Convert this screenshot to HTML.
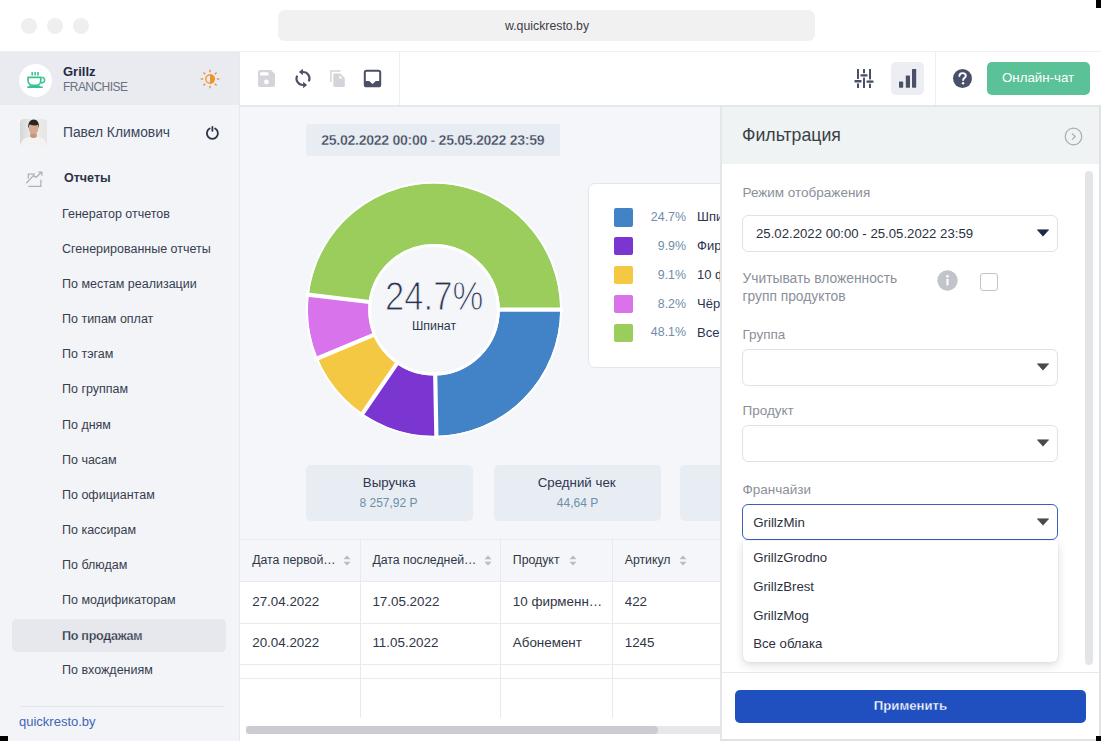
<!DOCTYPE html>
<html><head><meta charset="utf-8"><style>
html,body{margin:0;padding:0;width:1101px;height:741px;overflow:hidden;background:#fff;position:relative}
*{font-family:"Liberation Sans",sans-serif}
.t{position:absolute;white-space:nowrap;line-height:1}
.r{position:absolute;display:block}
</style></head><body>
<div class="r" style="left:21px;top:18px;width:16px;height:16px;background:#efefef;border-radius:8px;"></div>
<div class="r" style="left:47px;top:18px;width:16px;height:16px;background:#efefef;border-radius:8px;"></div>
<div class="r" style="left:73px;top:18px;width:16px;height:16px;background:#efefef;border-radius:8px;"></div>
<div class="r" style="left:278px;top:10px;width:537px;height:31px;background:#f1f1f1;border-radius:7px;"></div>
<div class="t " style="left:505px;top:19.59px;font-size:12.3px;color:#3d3d48;font-weight:400;">w.quickresto.by</div>
<div class="r" style="left:0px;top:51px;width:1101px;height:1px;background:#f0f0f2;border-radius:0px;"></div>
<div class="r" style="left:0px;top:52px;width:240px;height:689px;background:#f3f4f8;border-radius:0px;"></div>
<div class="r" style="left:239px;top:52px;width:1px;height:689px;background:#e6e8ec;border-radius:0px;"></div>
<div class="r" style="left:0px;top:52px;width:239px;height:53px;background:#e9ebf0;border-radius:0px;"></div>
<div class="r" style="left:19px;top:64px;width:33px;height:33px;background:#ffffff;border-radius:17px;"></div>
<svg class="r" style="left:22px;top:67px" width="28" height="26" viewBox="22 67 28 26">
<g fill="#35c390">
<rect x="31.4" y="72" width="1.6" height="3.6" rx=".5"/><rect x="34.3" y="72" width="1.6" height="3.6" rx=".5"/><rect x="37.2" y="72" width="1.6" height="3.6" rx=".5"/>
<path fill-rule="evenodd" d="M27.3 76.5H41.6V80.5C41.6 83.5 39.5 85.9 36.5 85.9H32.4C29.4 85.9 27.3 83.5 27.3 80.5Z M28.9 78.2H40V80.5C40 82.8 38.6 84.6 36.5 84.6H32.4C30.3 84.6 28.9 82.8 28.9 80.5Z"/>
<path d="M41.6 76.8H42.4C44.1 76.8 45.4 78.3 45.4 80.1C45.4 82 44 83.5 42.2 83.5H40.8V82H42.2C43.1 82 43.9 81.2 43.9 80.1C43.9 79.1 43.2 78.3 42.3 78.3H41.6Z"/>
<path d="M30 85.2H39L40.8 86.5H42.7V88H27.3V86.5H28.2Z"/>
</g></svg>
<div class="t " style="left:63px;top:65.00px;font-size:13px;color:#1f2a44;font-weight:700;">Grillz</div>
<div class="t " style="left:63px;top:81.14px;font-size:12px;color:#6b7180;font-weight:400;letter-spacing:-0.55px">FRANCHISE</div>
<svg class="r" style="left:199.8px;top:68.5px" width="20" height="20" viewBox="0 0 20 20">
<g stroke="#e39640" stroke-width="1.4" fill="none"><line x1="16.80" y1="10.00" x2="19.30" y2="10.00"/><line x1="14.81" y1="14.81" x2="16.58" y2="16.58"/><line x1="10.00" y1="16.80" x2="10.00" y2="19.30"/><line x1="5.19" y1="14.81" x2="3.42" y2="16.58"/><line x1="3.20" y1="10.00" x2="0.70" y2="10.00"/><line x1="5.19" y1="5.19" x2="3.42" y2="3.42"/><line x1="10.00" y1="3.20" x2="10.00" y2="0.70"/><line x1="14.81" y1="5.19" x2="16.58" y2="3.42"/></g><circle cx="10" cy="10" r="4.2" stroke="#ef9428" stroke-width="1.3" fill="none"/>
<path d="M10 5.2a4.8 4.8 0 0 1 0 9.6z" fill="#ef9428"/></svg>
<svg class="r" style="left:20px;top:119px" width="27" height="27" viewBox="0 0 27 27">
<defs><clipPath id="av"><rect width="27" height="27" rx="4"/></clipPath><linearGradient id="avbg" x1="0" x2="1"><stop offset="0" stop-color="#d6d7d7"/><stop offset="0.5" stop-color="#eeeeed"/><stop offset="1" stop-color="#e6e5e4"/></linearGradient></defs>
<g clip-path="url(#av)"><rect width="27" height="27" fill="url(#avbg)"/>
<path d="M0.5 27c0.3-5 2.5-7.6 6.5-8.6l6.5-1.6 6.5 1.6c4 1 6.2 3.6 6.5 8.6z" fill="#f3f4f1"/>
<path d="M10.6 12.5h5.8l0.5 5.3c-1 0.9-2.2 1.3-3.4 1.3s-2.4-0.4-3.4-1.3z" fill="#c4967c"/>
<ellipse cx="13.6" cy="9.6" rx="4.7" ry="5.6" fill="#d6aa90"/>
<path d="M8.4 9.5c-0.8-5.2 1.6-8.9 5.2-8.9 3.6 0 5.9 3.2 5.2 8.6l-0.9-3.1c-1.8 0.6-5 0.4-8.2-0.6z" fill="#2b2521"/>
</g></svg>
<div class="t " style="left:63px;top:125.92px;font-size:13.8px;color:#3c4458;font-weight:400;">Павел Климович</div>
<svg class="r" style="left:204px;top:124px" width="17" height="17" viewBox="204 124 17 17">
<g stroke="#2d3446" stroke-width="1.8" fill="none" stroke-linecap="round"><path d="M209.65 128.54A5.5 5.5 0 1 0 215.15 128.54"/><path d="M212.4 127V130.8"/></g></svg>
<svg class="r" style="left:24px;top:170px" width="20" height="19" viewBox="24 170 20 19">
<g stroke="#aeb1b8" stroke-width="1.3" fill="none"><path d="M35 174.1H28.3v4.5"/><path d="M28.3 186.3h12.6v-6.5"/><path d="M26.3 183.3l7.1-7.7 2.6 1.8 5.5-5.2"/><path d="M38.3 172.1h3.6v3.6"/></g></svg>
<div class="t " style="left:64px;top:172.42px;font-size:12.5px;color:#2d3446;font-weight:700;">Отчеты</div>
<div class="r" style="left:12px;top:619px;width:214px;height:33px;background:#e6e8ed;border-radius:5px;"></div>
<div class="t " style="left:62px;top:207.92px;font-size:12.5px;color:#363d4f;font-weight:400;">Генератор отчетов</div>
<div class="t " style="left:62px;top:243.02px;font-size:12.5px;color:#363d4f;font-weight:400;">Сгенерированные отчеты</div>
<div class="t " style="left:62px;top:278.12px;font-size:12.5px;color:#363d4f;font-weight:400;">По местам реализации</div>
<div class="t " style="left:62px;top:313.22px;font-size:12.5px;color:#363d4f;font-weight:400;">По типам оплат</div>
<div class="t " style="left:62px;top:348.32px;font-size:12.5px;color:#363d4f;font-weight:400;">По тэгам</div>
<div class="t " style="left:62px;top:383.42px;font-size:12.5px;color:#363d4f;font-weight:400;">По группам</div>
<div class="t " style="left:62px;top:418.52px;font-size:12.5px;color:#363d4f;font-weight:400;">По дням</div>
<div class="t " style="left:62px;top:453.62px;font-size:12.5px;color:#363d4f;font-weight:400;">По часам</div>
<div class="t " style="left:62px;top:488.72px;font-size:12.5px;color:#363d4f;font-weight:400;">По официантам</div>
<div class="t " style="left:62px;top:523.82px;font-size:12.5px;color:#363d4f;font-weight:400;">По кассирам</div>
<div class="t " style="left:62px;top:558.92px;font-size:12.5px;color:#363d4f;font-weight:400;">По блюдам</div>
<div class="t " style="left:62px;top:594.02px;font-size:12.5px;color:#363d4f;font-weight:400;">По модификаторам</div>
<div class="t " style="left:62px;top:629.63px;font-size:12.6px;color:#2d3446;font-weight:700;letter-spacing:-0.3px;-webkit-text-stroke:0.25px #e6e8ed">По продажам</div>
<div class="t " style="left:62px;top:664.22px;font-size:12.5px;color:#363d4f;font-weight:400;">По вхождениям</div>
<div class="r" style="left:20px;top:706px;width:204px;height:1px;background:#e3e5ea;border-radius:0px;"></div>
<div class="t " style="left:19px;top:714.70px;font-size:13px;color:#3d64b6;font-weight:400;">quickresto.by</div>
<div class="r" style="left:240px;top:52px;width:861px;height:53px;background:#ffffff;border-radius:0px;"></div>
<div class="r" style="left:240px;top:105px;width:480px;height:2px;background:#e6e9ec;border-radius:0px;"></div>
<div class="r" style="left:399px;top:52px;width:1px;height:53px;background:#eceef1;border-radius:0px;"></div>
<div class="r" style="left:935px;top:52px;width:1px;height:53px;background:#eceef1;border-radius:0px;"></div>
<svg class="r" style="left:258px;top:70px" width="17" height="17" viewBox="0 0 17 17">
<path d="M2 0h11l4 4v11a2 2 0 0 1-2 2H2a2 2 0 0 1-2-2V2a2 2 0 0 1 2-2z" fill="#d3d5da"/>
<rect x="1.8" y="2.3" width="9" height="3.3" rx="1.6" fill="#fff"/><circle cx="8.4" cy="12" r="2.4" fill="#fff"/></svg>
<svg class="r" style="left:288px;top:64px" width="28" height="28" viewBox="288 64 28 28">
<g fill="none" stroke="#4a5068" stroke-width="2.1"><path d="M302.4 72A6.5 6.5 0 0 1 308.8 81.4"/><path d="M297.2 75.6A6.5 6.5 0 0 0 303.6 85"/></g>
<path d="M298.9 72L302.9 68.7V75.3Z M307.1 85L303.1 81.7V88.3Z" fill="#4a5068"/></svg>
<svg class="r" style="left:324px;top:64px" width="28" height="28" viewBox="324 64 28 28">
<path d="M330.9 82V70.9H340.6" stroke="#d3d5da" stroke-width="1.5" fill="none"/>
<path d="M333.3 74.6Q333.3 73.4 334.5 73.4H340.2L344.8 78V85.7Q344.8 86.9 343.6 86.9H334.5Q333.3 86.9 333.3 85.7Z" fill="#d3d5da"/>
<path d="M339.3 75.2V78.5H342.8Z" fill="#fff"/></svg>
<svg class="r" style="left:363px;top:69px" width="19" height="19" viewBox="0 0 19 19">
<rect x="1.8" y="1.8" width="15.4" height="15.4" rx="1.8" fill="none" stroke="#4a5068" stroke-width="2"/>
<path d="M1 12h5.2l3.3 3 3.3-3H18v5.5H1z" fill="#4a5068"/></svg>
<svg class="r" style="left:854px;top:68px" width="20" height="21" viewBox="0 0 20 21">
<g stroke="#4a5068" stroke-width="2" fill="none"><path d="M4 1v19M10 1v19M16 1v19"/></g>
<g fill="#4a5068"><rect x="0.5" y="12" width="7" height="2.4" rx=".5"/><rect x="6.5" y="6.2" width="7" height="2.4" rx=".5"/><rect x="12.5" y="12.4" width="7" height="2.4" rx=".5"/></g>
<g fill="#fff"><rect x="3" y="11" width="2" height="1"/><rect x="3" y="14.4" width="2" height="1"/><rect x="9" y="5.2" width="2" height="1"/><rect x="9" y="8.6" width="2" height="1"/><rect x="15" y="11.4" width="2" height="1"/><rect x="15" y="14.8" width="2" height="1"/></g></svg>
<div class="r" style="left:891px;top:62px;width:33px;height:33px;background:#eceef3;border-radius:5px;"></div>
<svg class="r" style="left:898px;top:68px" width="20" height="21" viewBox="0 0 20 21">
<g fill="#4a5068"><rect x="1" y="13.6" width="4.2" height="6.1" rx=".6"/><rect x="7.8" y="7.6" width="4.2" height="12.1" rx=".6"/><rect x="14" y="1" width="4.2" height="18.7" rx=".6"/></g></svg>
<svg class="r" style="left:952px;top:68px" width="21" height="21" viewBox="0 0 21 21">
<circle cx="10.5" cy="10.5" r="9.5" fill="#4a5068"/>
<path d="M7.4 8.1c0-1.9 1.4-3 3.2-3 1.9 0 3.2 1.1 3.2 2.7 0 2.2-2.7 2.3-2.7 4.3" fill="none" stroke="#fff" stroke-width="1.9" stroke-linecap="round"/>
<circle cx="11.1" cy="15.2" r="1.2" fill="#fff"/></svg>
<div class="r" style="left:987px;top:62px;width:103px;height:33px;background:#5bc196;border-radius:5px;"></div>
<div class="t " style="left:1002px;top:71.24px;font-size:13.3px;color:#ffffff;font-weight:400;">Онлайн-чат</div>
<div class="r" style="left:240px;top:107px;width:480px;height:634px;background:#f4f6f9;border-radius:0px;"></div>
<div class="r" style="left:306px;top:124px;width:254px;height:32px;background:#e8edf3;border-radius:3px;"></div>
<div class="t " style="left:321.3px;top:133.26px;font-size:14.1px;color:#3a4256;font-weight:700;letter-spacing:-0.3px;-webkit-text-stroke:0.35px #e8edf3">25.02.2022 00:00 - 25.05.2022 23:59</div>
<svg class="r" style="left:0;top:0" width="1101" height="741"><path d="M560.20 309.70 A126.2 126.2 0 0 1 436.38 435.88 L435.24 375.49 A65.8 65.8 0 0 0 499.80 309.70 Z" fill="#4183c6"/><path d="M436.38 435.88 A126.2 126.2 0 0 1 362.41 413.63 L396.67 363.89 A65.8 65.8 0 0 0 435.24 375.49 Z" fill="#7b35d1"/><path d="M362.41 413.63 A126.2 126.2 0 0 1 317.56 358.36 L373.29 335.07 A65.8 65.8 0 0 0 396.67 363.89 Z" fill="#f5c843"/><path d="M317.56 358.36 A126.2 126.2 0 0 1 308.70 294.67 L368.67 301.86 A65.8 65.8 0 0 0 373.29 335.07 Z" fill="#d973eb"/><path d="M308.70 294.67 A126.2 126.2 0 0 1 560.20 309.70 L499.80 309.70 A65.8 65.8 0 0 0 368.67 301.86 Z" fill="#9acd5b"/><g stroke="#fff" stroke-width="4.2"><line x1="496.80" y1="309.70" x2="563.20" y2="309.70"/><line x1="435.18" y1="372.49" x2="436.44" y2="438.88"/><line x1="398.38" y1="361.42" x2="360.71" y2="416.10"/><line x1="376.06" y1="333.91" x2="314.79" y2="359.52"/><line x1="371.65" y1="302.22" x2="305.72" y2="294.31"/></g><circle cx="434" cy="309.7" r="127.0" fill="none" stroke="#fff" stroke-width="1.8"/><circle cx="434" cy="309.7" r="64.3" fill="none" stroke="#fff" stroke-width="3"/></svg>
<div class="t " style="left:384.8px;top:275.66px;font-size:40.8px;color:#2b3452;font-weight:400;transform:scaleX(0.85);transform-origin:0 0;-webkit-text-stroke:1.1px #f4f6f9">24.7%</div>
<div class="t " style="left:412px;top:320.30px;font-size:12.4px;color:#2e3650;font-weight:400;">Шпинат</div>
<div class="r" style="left:588px;top:182.5px;width:200px;height:185px;background:#fff;border:1px solid #e3e6ea;border-radius:7px;box-sizing:border-box"></div>
<div class="r" style="left:614px;top:208.0px;width:18.5px;height:18.5px;background:#4183c6;border-radius:2px;"></div>
<div class="t" style="left:600px;width:86px;text-align:right;top:210.80px;font-size:12.4px;color:#6f8dab">24.7%</div>
<div class="t " style="left:697px;top:210.30px;font-size:13px;color:#2b3452;font-weight:400;">Шпинат</div>
<div class="r" style="left:614px;top:236.9px;width:18.5px;height:18.5px;background:#7b35d1;border-radius:2px;"></div>
<div class="t" style="left:600px;width:86px;text-align:right;top:239.70px;font-size:12.4px;color:#6f8dab">9.9%</div>
<div class="t " style="left:697px;top:239.20px;font-size:13px;color:#2b3452;font-weight:400;">Фирменный</div>
<div class="r" style="left:614px;top:265.8px;width:18.5px;height:18.5px;background:#f4c843;border-radius:2px;"></div>
<div class="t" style="left:600px;width:86px;text-align:right;top:268.60px;font-size:12.4px;color:#6f8dab">9.1%</div>
<div class="t " style="left:697px;top:268.10px;font-size:13px;color:#2b3452;font-weight:400;">10 фирменных</div>
<div class="r" style="left:614px;top:294.7px;width:18.5px;height:18.5px;background:#da73ea;border-radius:2px;"></div>
<div class="t" style="left:600px;width:86px;text-align:right;top:297.50px;font-size:12.4px;color:#6f8dab">8.2%</div>
<div class="t " style="left:697px;top:297.00px;font-size:13px;color:#2b3452;font-weight:400;">Чёрный</div>
<div class="r" style="left:614px;top:323.6px;width:18.5px;height:18.5px;background:#9acd5b;border-radius:2px;"></div>
<div class="t" style="left:600px;width:86px;text-align:right;top:326.40px;font-size:12.4px;color:#6f8dab">48.1%</div>
<div class="t " style="left:697px;top:325.90px;font-size:13px;color:#2b3452;font-weight:400;">Все остальные</div>
<div class="r" style="left:306px;top:465px;width:167px;height:56px;background:#e8edf3;border-radius:5px;"></div>
<div class="t" style="left:305.2px;width:168px;text-align:center;top:476.14px;font-size:13.3px;color:#2e3650">Выручка</div>
<div class="t" style="left:304.5px;width:168px;text-align:center;top:496.64px;font-size:12px;color:#6c8fa8">8 257,92 Р</div>
<div class="r" style="left:493.5px;top:465px;width:167px;height:56px;background:#e8edf3;border-radius:5px;"></div>
<div class="t" style="left:492.7px;width:168px;text-align:center;top:476.14px;font-size:13.3px;color:#2e3650">Средний чек</div>
<div class="t" style="left:493.5px;width:168px;text-align:center;top:496.64px;font-size:12px;color:#6c8fa8">44,64 Р</div>
<div class="r" style="left:680px;top:465px;width:167px;height:56px;background:#e8edf3;border-radius:5px;"></div>
<div class="t" style="left:679.2px;width:168px;text-align:center;top:476.14px;font-size:13.3px;color:#2e3650"></div>
<div class="t" style="left:680px;width:168px;text-align:center;top:496.64px;font-size:12px;color:#6c8fa8"></div>
<div class="r" style="left:240px;top:539px;width:480px;height:42px;background:#f4f6f9;border-radius:0px;"></div>
<div class="r" style="left:240px;top:581px;width:480px;height:160px;background:#ffffff;border-radius:0px;"></div>
<div class="r" style="left:240px;top:539px;width:480px;height:1px;background:#e8eaee;border-radius:0px;"></div>
<div class="r" style="left:240px;top:581px;width:480px;height:1px;background:#e8eaee;border-radius:0px;"></div>
<div class="r" style="left:240px;top:622.5px;width:480px;height:1px;background:#e8eaee;border-radius:0px;"></div>
<div class="r" style="left:240px;top:664px;width:480px;height:1px;background:#e8eaee;border-radius:0px;"></div>
<div class="r" style="left:240px;top:678px;width:480px;height:1px;background:#e8eaee;border-radius:0px;"></div>
<div class="r" style="left:359.5px;top:539px;width:1px;height:179px;background:#e8eaee;border-radius:0px;"></div>
<div class="r" style="left:500px;top:539px;width:1px;height:179px;background:#e8eaee;border-radius:0px;"></div>
<div class="r" style="left:611.5px;top:539px;width:1px;height:179px;background:#e8eaee;border-radius:0px;"></div>
<div class="t " style="left:252.2px;top:554.29px;font-size:12.3px;color:#2f3647;font-weight:400;">Дата первой…</div>
<svg class="r" style="left:343.4px;top:555px" width="8" height="11" viewBox="0 0 8 11"><path d="M4 0.5L7.6 4.3H0.4z M4 10.5L7.6 6.7H0.4z" fill="#b9bcc2"/></svg>
<div class="t " style="left:372.4px;top:554.29px;font-size:12.3px;color:#2f3647;font-weight:400;">Дата последней…</div>
<svg class="r" style="left:484.2px;top:555px" width="8" height="11" viewBox="0 0 8 11"><path d="M4 0.5L7.6 4.3H0.4z M4 10.5L7.6 6.7H0.4z" fill="#b9bcc2"/></svg>
<div class="t " style="left:512.8px;top:554.29px;font-size:12.3px;color:#2f3647;font-weight:400;">Продукт</div>
<svg class="r" style="left:569px;top:555px" width="8" height="11" viewBox="0 0 8 11"><path d="M4 0.5L7.6 4.3H0.4z M4 10.5L7.6 6.7H0.4z" fill="#b9bcc2"/></svg>
<div class="t " style="left:624.7px;top:554.29px;font-size:12.3px;color:#2f3647;font-weight:400;">Артикул</div>
<svg class="r" style="left:679.3px;top:555px" width="8" height="11" viewBox="0 0 8 11"><path d="M4 0.5L7.6 4.3H0.4z M4 10.5L7.6 6.7H0.4z" fill="#b9bcc2"/></svg>
<div class="t " style="left:252.2px;top:594.96px;font-size:13.4px;color:#2f3647;font-weight:400;">27.04.2022</div>
<div class="t " style="left:372.4px;top:594.96px;font-size:13.4px;color:#2f3647;font-weight:400;">17.05.2022</div>
<div class="t " style="left:512.8px;top:594.96px;font-size:13.4px;color:#2f3647;font-weight:400;">10 фирменн…</div>
<div class="t " style="left:624.7px;top:594.96px;font-size:13.4px;color:#2f3647;font-weight:400;">422</div>
<div class="t " style="left:252.2px;top:636.26px;font-size:13.4px;color:#2f3647;font-weight:400;">20.04.2022</div>
<div class="t " style="left:372.4px;top:636.26px;font-size:13.4px;color:#2f3647;font-weight:400;">11.05.2022</div>
<div class="t " style="left:512.8px;top:636.26px;font-size:13.4px;color:#2f3647;font-weight:400;">Абонемент</div>
<div class="t " style="left:624.7px;top:636.26px;font-size:13.4px;color:#2f3647;font-weight:400;">1245</div>
<div class="r" style="left:246px;top:726px;width:474px;height:8px;background:#e6e7ea;border-radius:4px 0 0 4pxpx;"></div>
<div class="r" style="left:246px;top:726px;width:412px;height:8px;background:#cbccd2;border-radius:4px;"></div>
<div class="r" style="left:720px;top:105px;width:381px;height:636px;background:#ffffff;border-radius:0px;"></div>
<div class="r" style="left:720px;top:105px;width:2px;height:636px;background:#e4e6e9;border-radius:0px;"></div>
<div class="r" style="left:1099px;top:105px;width:2px;height:636px;background:#e0e3e6;border-radius:0px;"></div>
<div class="r" style="left:722px;top:105px;width:377px;height:2px;background:#e4e7ea;border-radius:0px;"></div>
<div class="r" style="left:722px;top:107px;width:377px;height:56.6px;background:#eff3f4;border-radius:0px;"></div>
<div class="t " style="left:742px;top:127.22px;font-size:17.7px;color:#3a3f45;font-weight:400;">Фильтрация</div>
<svg class="r" style="left:1064px;top:126.5px" width="19" height="19" viewBox="0 0 19 19">
<circle cx="9.5" cy="9.5" r="8.3" fill="none" stroke="#aaadb2" stroke-width="1.2"/><path d="M8 6.3l3.2 3.2L8 12.7" fill="none" stroke="#aaadb2" stroke-width="1.2"/></svg>
<div class="r" style="left:1085px;top:171px;width:8px;height:494px;background:#e4e5e9;border-radius:4px;"></div>
<div class="t " style="left:742.5px;top:185.77px;font-size:13.5px;color:#8a9099;font-weight:400;">Режим отображения</div>
<div class="r" style="left:742px;top:215px;width:316px;height:36.5px;border:1px solid #dfe2e6;border-radius:6px;box-sizing:border-box;background:#fff"></div>
<svg class="r" style="left:1036.5px;top:229.4px" width="12" height="8" viewBox="0 0 12 8"><path d="M0.3 0.8h11.4L6 7.2z" fill="#1e2a4a" stroke="#1e2a4a" stroke-width=".6" stroke-linejoin="round"/></svg>
<div class="t " style="left:756px;top:226.63px;font-size:13.2px;color:#2b3140;font-weight:400;">25.02.2022 00:00 - 25.05.2022 23:59</div>
<div class="t " style="left:742.5px;top:272.12px;font-size:13.8px;color:#8a9099;font-weight:400;">Учитывать вложенность</div>
<div class="t " style="left:742.5px;top:289.52px;font-size:13.8px;color:#8a9099;font-weight:400;">групп продуктов</div>
<svg class="r" style="left:936.5px;top:270px" width="21" height="21" viewBox="0 0 21 21">
<circle cx="10.5" cy="10.5" r="10.2" fill="#c2c4cb"/><circle cx="10.5" cy="6.2" r="1.3" fill="#fff"/><rect x="9.45" y="8.8" width="2.1" height="6.8" rx=".8" fill="#fff"/></svg>
<div class="r" style="left:980px;top:273px;width:17.5px;height:17.5px;border:1.3px solid #c0c4cb;border-radius:3px;box-sizing:border-box;background:#fff"></div>
<div class="t " style="left:742.5px;top:327.67px;font-size:13.5px;color:#8a9099;font-weight:400;">Группа</div>
<div class="r" style="left:742px;top:348.5px;width:316px;height:37px;border:1px solid #dfe2e6;border-radius:6px;box-sizing:border-box;background:#fff"></div>
<svg class="r" style="left:1036.5px;top:363.2px" width="12" height="8" viewBox="0 0 12 8"><path d="M0.3 0.8h11.4L6 7.2z" fill="#4a4a4a" stroke="#4a4a4a" stroke-width=".6" stroke-linejoin="round"/></svg>
<div class="t " style="left:742.5px;top:404.27px;font-size:13.5px;color:#8a9099;font-weight:400;">Продукт</div>
<div class="r" style="left:742px;top:424.5px;width:316px;height:37px;border:1px solid #dfe2e6;border-radius:6px;box-sizing:border-box;background:#fff"></div>
<svg class="r" style="left:1036.5px;top:439.2px" width="12" height="8" viewBox="0 0 12 8"><path d="M0.3 0.8h11.4L6 7.2z" fill="#4a4a4a" stroke="#4a4a4a" stroke-width=".6" stroke-linejoin="round"/></svg>
<div class="t " style="left:742.5px;top:482.67px;font-size:13.5px;color:#8a9099;font-weight:400;">Франчайзи</div>
<div class="r" style="left:742px;top:504px;width:316px;height:35.5px;border:1.7px solid #3a5fc0;border-radius:6px;box-sizing:border-box;background:#fff"></div>
<svg class="r" style="left:1036.5px;top:518.0px" width="12" height="8" viewBox="0 0 12 8"><path d="M0.3 0.8h11.4L6 7.2z" fill="#4a4a4a" stroke="#4a4a4a" stroke-width=".6" stroke-linejoin="round"/></svg>
<div class="t " style="left:753.2px;top:515.64px;font-size:13.3px;color:#2b3140;font-weight:400;">GrillzMin</div>
<div class="r" style="left:742.5px;top:540.5px;width:315.5px;height:121px;background:#fff;border-radius:0 0 6px 6px;box-shadow:0 3px 8px rgba(30,40,60,0.16), 0 0 1px rgba(30,40,60,0.2)"></div>
<div class="t " style="left:753.2px;top:550.93px;font-size:13.2px;color:#2b3140;font-weight:400;">GrillzGrodno</div>
<div class="t " style="left:753.2px;top:579.78px;font-size:13.2px;color:#2b3140;font-weight:400;">GrillzBrest</div>
<div class="t " style="left:753.2px;top:608.63px;font-size:13.2px;color:#2b3140;font-weight:400;">GrillzMog</div>
<div class="t " style="left:753.2px;top:637.48px;font-size:13.2px;color:#2b3140;font-weight:400;">Все облака</div>
<div class="r" style="left:722px;top:672px;width:377px;height:1px;background:#e6e8eb;border-radius:0px;"></div>
<div class="r" style="left:735px;top:690px;width:351px;height:32.5px;background:#2050c0;border-radius:5px;"></div>
<div class="t" style="left:735px;width:351px;text-align:center;top:699.10px;font-size:13.2px;color:#fff;font-weight:700;-webkit-text-stroke:0.3px #2050c0">Применить</div>
<div class="r" style="left:720px;top:739px;width:381px;height:2px;background:#e0e3e6;border-radius:0px;"></div>
<div class="r" style="left:1096px;top:0px;width:5px;height:8px;background:#000;border-radius:0px;"></div>
<div class="r" style="left:0px;top:736px;width:8px;height:5px;background:#000;border-radius:0px;"></div>
<div class="r" style="left:1096px;top:736px;width:5px;height:5px;background:#000;border-radius:0px;"></div>
</body></html>
